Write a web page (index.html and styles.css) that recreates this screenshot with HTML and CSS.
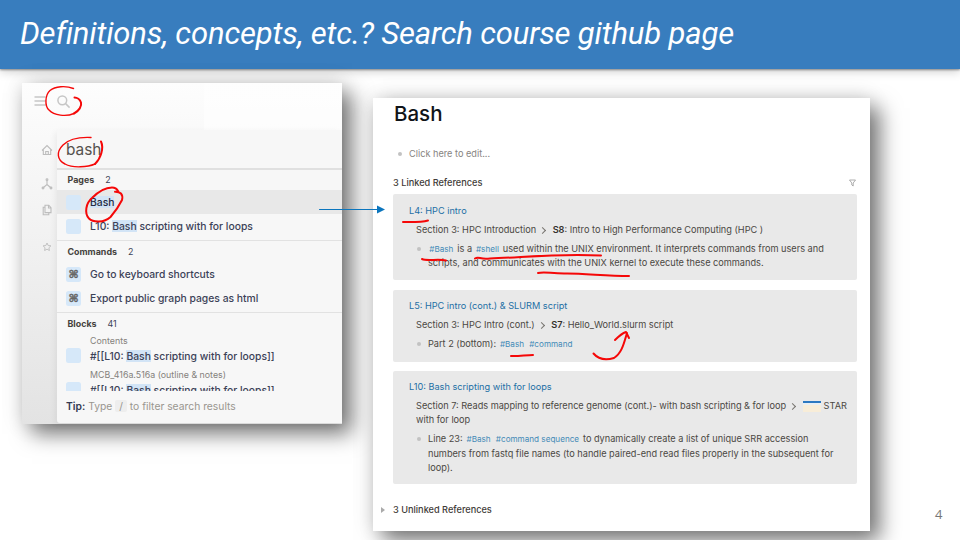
FILE: index.html
```html
<!DOCTYPE html>
<html lang="en">
<head>
<meta charset="utf-8">
<title>Definitions, concepts, etc.? Search course github page</title>
<link rel="stylesheet" href="styles.css">
</head>
<body>
<div class="slide">
  <header class="banner"><h1>Definitions, concepts, etc.? Search course github page</h1></header>
  <main class="stage">
    <section class="search-panel">
      <div class="toolbar">
        <svg width="12" height="12" viewBox="0 0 12 12"><path d="M.5 2h11M.5 6h11M.5 10h11"/></svg>
        <svg width="14" height="14" viewBox="0 0 14 14"><circle cx="5.300" cy="5.300" r="4.400"/><path d="M8.600 8.600l4 4"/></svg>
      </div>
      <div class="search-main">
        <nav class="rail">
          <svg width="12" height="12" viewBox="0 0 12 12"><path d="M1 6.500L6 1.500l5 5M2.300 5.500v5h7.400v-5M4.700 10.500v-3h2.600v3"/></svg>
          <svg width="12" height="12" viewBox="0 0 12 12"><path d="M6 2.500v4L2.500 9.500M6 6.500l3.500 3"/><circle cx="6" cy="1.800" r=".9"/><circle cx="2" cy="10" r=".9"/><circle cx="10" cy="10" r=".9"/></svg>
          <svg width="12" height="12" viewBox="0 0 12 12"><path d="M4 1.200h3.800L10 3.600v5H4zM7.500 1.500V4H10M4 3.300H2.200v7.400h5.600V8.800"/></svg>
          <svg width="10" height="10" viewBox="0 0 12 12"><path d="M6 1.200l1.400 3 3.300.4-2.400 2.300.6 3.300L6 8.600l-2.900 1.600.6-3.300L1.300 4.600l3.300-.4z"/></svg>
        </nav>
        <div class="dialog">
          <div class="query">bash</div>
          <div class="results">
            <div class="group-title">Pages<span>2</span></div>
            <div class="item selected"><i class="chip"></i><span><mark>Bash</mark></span></div>
            <div class="item"><i class="chip"></i><span>L10: <mark>Bash</mark> scripting with for loops</span></div>
            <div class="group-title ruled">Commands<span>2</span></div>
            <div class="item"><i class="chip">⌘</i><span>Go to keyboard shortcuts</span></div>
            <div class="item"><i class="chip">⌘</i><span>Export public graph pages as html</span></div>
            <div class="group-title ruled blocks">Blocks<span>41</span></div>
            <div class="source">Contents</div>
            <div class="item block"><i class="chip"></i><span>#[[L10: <mark>Bash</mark> scripting with for loops]]</span></div>
            <div class="source second">MCB_416a.516a (outline &amp; notes)</div>
            <div class="item block"><i class="chip"></i><span>#[[L10: <mark>Bash</mark> scripting with for loops]]</span></div>
          </div>
          <div class="tip"><b>Tip:</b> Type <kbd>/</kbd> to filter search results</div>
        </div>
      </div>
    </section>

    <section class="page-panel">
      <h2>Bash</h2>
      <p class="edit">Click here to edit...</p>
      <div class="refs-head"><span>3 Linked References</span>
        <svg width="7" height="8" viewBox="0 0 7 8"><path d="M.5 1h6L4.200 4v3L2.800 6V4z"/></svg>
      </div>
      <article class="card first">
        <h3>L4: HPC intro</h3>
        <p class="crumb"><span>Section 3: HPC Introduction</span><i class="sep"></i><span><b>S8</b>: Intro to High Performance Computing (HPC )</span></p>
        <p class="bullet"><a>#Bash</a> is a <a>#shell</a> used within the UNIX environment. It interprets commands from users and<br>scripts, and communicates with the UNIX kernel to execute these commands.</p>
      </article>
      <article class="card second">
        <h3>L5: HPC intro (cont.) &amp; SLURM script</h3>
        <p class="crumb"><span>Section 3: HPC Intro (cont.)</span><i class="sep"></i><span><b>S7</b>: Hello_World.slurm script</span></p>
        <p class="bullet">Part 2 (bottom): <a>#Bash</a> <a>#command</a></p>
      </article>
      <article class="card third">
        <h3>L10: Bash scripting with for loops</h3>
        <p class="crumb"><span>Section 7: Reads mapping to reference genome (cont.)- with bash scripting &amp; for loop</span><i class="sep"></i><i class="thumb"></i><span>STAR</span></p>
        <p class="crumb">with for loop</p>
        <p class="bullet">Line 23: <a>#Bash</a> <a>#command sequence</a> to dynamically create a list of unique SRR accession<br>numbers from fastq file names (to handle paired-end read files properly in the subsequent for<br>loop).</p>
      </article>
      <p class="unlinked">3 Unlinked References</p>
    </section>
    <div class="page-number">4</div>
  </main>

  <svg class="ink" width="960" height="540" viewBox="0 0 960 540">
    <path class="arrow" d="M319.500 209.500H378"/><path class="head" d="M377 205.500l8 4-8 4z"/>
    <path d="M73.500 88.500C66 85.500 55 86 50 90.500C45 95 44.500 106 49 110C54 115.500 66 117 74 113.500"/>
    <path class="thick" d="M74 113.500C79 111 82 106 81 102.500C80 99.500 77 97.500 74.500 97.500"/>
    <path d="M91 137.500C80 137 69 139 63 145C56 152 57 160 65 164C73 168.500 88 167 95 164"/>
    <path class="thick" d="M101 141.500C104 148 101 158 95 164"/>
    <path class="thick" d="M115 191.700C120 191.500 123.500 194 122 200C119 206 114 213 110.500 217C104 223 93 222.500 89 218.500C84 213 86 203 92 198C98 192 106 187.500 112 187.500C115 187.500 117 189 118 191"/>
    <path class="thick" d="M403 222C411 222 421 222.500 428 220.500"/>
    <path class="thick" d="M422 259C427 261.500 438 258.500 446 260.500"/>
    <path class="thick" d="M475 258.500C479 256 480 260 490 258.500C522 257.500 560 253 601 255.500"/>
    <path class="thick" d="M538 273C545 271 552 274 567 273.500C586 273.500 606 276 629 276"/>
    <path class="thick" d="M511 356C518 356.500 526 355 533 355"/>
    <path class="thick" d="M593.500 353.500C599 360 607 360 614 358C622 353 624 343 627 333M615 340C619 336 623 333 626 332L629 338"/>
  </svg>
</div>
</body>
</html>
```
FILE: styles.css
```css
* { box-sizing: border-box; }
body { margin: 0; font-family: Inter, "Liberation Sans", sans-serif; }
h1, h2, h3, p { margin: 0; font-weight: 400; }
i { font-style: normal; }
.slide { position: relative; width: 960px; height: 540px; overflow: hidden; background: #fff; display: flex; flex-direction: column; }
.banner { height: 69px; flex: none; background: #387dbe; display: flex; padding: 15px 20px; box-shadow: 0 1px 2px rgba(0,0,0,.4), 0 3px 9px rgba(0,0,0,.18); }
.banner h1 { font: italic 400 31px/38px Roboto, sans-serif; color: #fff; white-space: nowrap; letter-spacing: -.15px; }
.stage { flex: 1; display: flex; align-items: flex-start; }

.search-panel { width: 320px; height: 341px; margin: 14px 0 0 22px; flex: none; display: flex; flex-direction: column; overflow: visible; background: linear-gradient(#fdfdfd, #f5f5f5 32%, #e3e3e3); box-shadow: 10px 10px 20px rgba(0,0,0,.5), 0 0 20px rgba(0,0,0,.14); }
.toolbar { height: 47px; flex: none; display: flex; gap: 11px; padding: 12px 0 0 12px; background: linear-gradient(90deg, transparent 182px, rgba(255,255,255,.6) 182px); }
.toolbar svg, .rail svg { fill: none; stroke: #c6c6c6; stroke-width: 1.500; }
.search-main { flex: 1; display: flex; min-height: 0; }
.rail { width: 35px; display: flex; flex-direction: column; align-items: center; padding: 14px 0 0 15px; }
.rail svg { stroke-width: 1.100; stroke: #bdbdbd; flex: none; margin-bottom: 22px; }
.rail svg:nth-child(2) { margin-bottom: 14px; }
.rail svg:nth-child(3) { margin-bottom: 26px; }
.dialog { flex: 1; height: 293px; background: #f7f7f7; border-radius: 0 0 0 3px; box-shadow: -2px 2px 6px rgba(0,0,0,.06); color: #3c4257; display: flex; flex-direction: column; white-space: nowrap; }
.query { height: 40px; flex: none; padding: 6px 0 0 9px; border-bottom: 2px solid #e0e0e0; color: #55524e; font-size: 15.400px; line-height: 28px; }
.results { height: 221px; overflow: hidden; }
.group-title { height: 20px; padding-left: 10.500px; font-size: 8.900px; line-height: 20px; font-weight: 700; color: #45423d; }
.group-title span { margin-left: 11px; font-weight: 400; color: #3c4257; }
.ruled { height: 22px; margin-top: 2px; border-top: 1px solid #e2e2e2; line-height: 22px; }
.blocks { height: 22px; line-height: 21px; }
.item { height: 24px; display: flex; align-items: center; gap: 9px; padding-left: 9px; font-size: 10.340px; font-weight: 500; }
.selected { background: #e8e8e8; color: #252b43; }
.chip { width: 15px; height: 15px; flex: none; border-radius: 2.500px; background: #d6e8f9; color: #666; font: 700 11px/15px "DejaVu Sans", sans-serif; text-align: center; -webkit-text-stroke: .4px #666; }
mark { background: #d2e4f6; color: inherit; }
.source { height: 13px; padding-left: 33px; font-size: 8.850px; line-height: 13px; color: #85827d; }
.block { height: 17px; }
.second.source { margin-top: 4px; }
.tip { flex: 1; padding-left: 9px; font-size: 10.320px; line-height: 31px; color: #99968f; }
.tip b { font-weight: 600; color: #333952; }
.tip kbd { font: inherit; background: #eee; border-radius: 2px; padding: 0 4px; }

.page-panel { width: 497px; height: 433px; margin: 29px 0 0 31px; padding: 0 13px 0 20px; flex: none; background: #fff; box-shadow: 10px 10px 20px rgba(0,0,0,.5), 0 0 20px rgba(0,0,0,.14); color: #4b4843; font-size: 9.180px; line-height: 14px; white-space: nowrap; }
.page-panel h2 { padding-left: 1px; height: 32px; font-size: 20.500px; line-height: 32px; font-weight: 500; color: #101418; }
.edit { margin: 17px 0 0 5px; display: flex; align-items: center; color: #87847f; }
.edit::before, .bullet::before { content: ""; width: 4px; height: 4px; border-radius: 50%; background: #c2c2c2; flex: none; }
.edit::before { margin-right: 7px; }
.refs-head { margin-top: 15px; display: flex; justify-content: space-between; font-weight: 500; color: #3f3c38; }
.refs-head svg { margin: 3px 1px 0 0; fill: none; stroke: #999; stroke-width: .8; }
.card { background: #e9e9e9; border-radius: 2px; padding: 9.500px 0 0 16px; }
.card h3 { font-size: 9.170px; line-height: 14px; color: #1d6fa5; }
.card.first { margin-top: 4.300px; height: 85.700px; padding-top: 10px; }
.card.second { margin-top: 9.700px; height: 72px; }
.card.third { margin-top: 9.300px; height: 113px; }
.crumb { display: flex; align-items: center; padding-left: 7px; height: 14px; }
h3 + .crumb { margin-top: 5px; }
.crumb b { color: #34312d; font-weight: 600; }
.sep { flex: none; width: 5px; height: 5px; border: solid #77746f; border-width: 1px 1px 0 0; transform: rotate(45deg); margin: 1px 7.500px 0 4px; }
.thumb { flex: none; width: 18px; height: 11px; margin-right: 3px; background: linear-gradient(#2d79c1 0 2px, #e9eff3 2px 4px, #f8edd8 4px); }
.bullet { position: relative; padding-left: 19px; margin-top: 5px; line-height: 13.700px; }
.first .bullet { line-height: 14px; }
.bullet::before { position: absolute; left: 8px; top: 5px; }
.bullet a { font-size: 8.150px; color: #4389b7; margin: 0 1.300px; }
.unlinked { position: relative; margin-top: 19px; font-weight: 500; color: #3f3c38; }
.unlinked::before { content: ""; position: absolute; left: -12px; top: 4px; border: solid transparent; border-width: 3px 0 3px 4px; border-left-color: #aaa; }
.page-number { margin: 437px 0 0 65px; font: 13px/16px "Open Sans", sans-serif; color: #777; }
.ink { position: absolute; inset: 0; pointer-events: none; fill: none; stroke: #f50808; stroke-width: 1.400; stroke-linecap: round; stroke-linejoin: round; }
.ink .thick { stroke-width: 2; }
.ink .arrow { stroke: #0b75bd; stroke-width: 1; }
.ink .head { fill: #0b75bd; stroke: none; }
```
